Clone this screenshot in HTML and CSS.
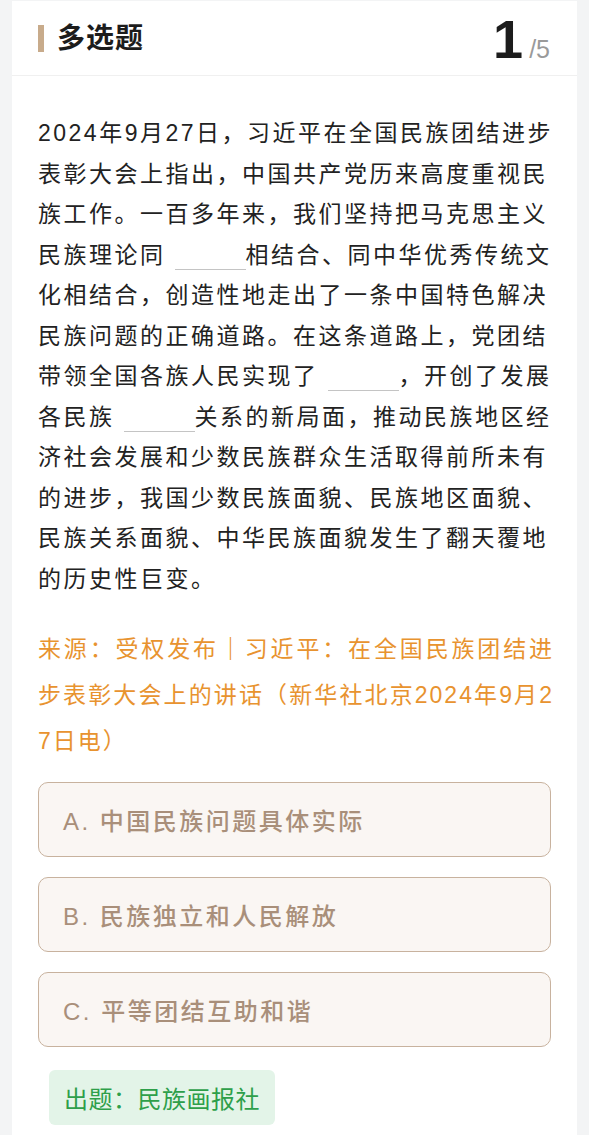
FILE: index.html
```html
<!DOCTYPE html>
<html lang="zh-CN">
<head>
    <meta charset="UTF-8">
    <meta name="viewport" content="width=device-width, initial-scale=1.0">
    <title>多选题</title>
    <link rel="stylesheet" href="styles.css">
</head>
<body>
    <div class="card">
        <div class="card-head">
            <div class="title">多选题</div>
            <div class="count"><span class="current">1</span><span class="total">/5</span></div>
        </div>

        <div class="card-body">
            <p class="question">2024年9月27日，习近平在全国民族团结进步表彰大会上指出，中国共产党历来高度重视民族工作。一百多年来，我们坚持把马克思主义民族理论同<span class="blank"></span>相结合、同中华优秀传统文化相结合，创造性地走出了一条中国特色解决民族问题的正确道路。在这条道路上，党团结带领全国各族人民实现了<span class="blank"></span>，开创了发展各民族<span class="blank"></span>关系的新局面，推动民族地区经济社会发展和少数民族群众生活取得前所未有的进步，我国少数民族面貌、民族地区面貌、民族关系面貌、中华民族面貌发生了翻天覆地的历史性巨变。</p>

            <p class="source">来源：受权发布<span class="sep">｜</span>习近平：在全国民族团结进步表彰大会上的讲话（新华社北京2024年9月27日电）</p>

            <div class="options">
                <div class="option">A. 中国民族问题具体实际</div>
                <div class="option">B. 民族独立和人民解放</div>
                <div class="option">C. 平等团结互助和谐</div>
            </div>

            <div class="author">出题：民族画报社</div>
        </div>
    </div>
</body>
</html>
```

FILE: styles.css
```css
body {
    margin: 0;
    background-color: #f3f4f5;
    font-family: 'Liberation Sans', 'Noto Sans CJK SC', sans-serif;
    color: #222;
}

.card {
    margin: 1px 12px 0 12px;
    background: #fff;
    min-height: 1134px;
}

.card-head {
    height: 74px;
    display: flex;
    justify-content: space-between;
    align-items: center;
    padding: 0 27px 0 26px;
    border-bottom: 1px solid #f0f0f0;
}

.title {
    border-left: 6px solid #c8ab8b;
    padding-left: 13px;
    font-size: 28px;
    font-weight: bold;
    line-height: 27px;
    color: #1c1c1c;
    letter-spacing: 1px;
}

.count {
    display: flex;
    align-items: baseline;
    gap: 6px;
    margin-top: 2px;
}

.count .current {
    font-size: 54px;
    font-weight: bold;
    line-height: 52px;
    color: #1c1c1c;
}

.count .total {
    font-size: 25px;
    color: #9a9a9a;
}

.card-body {
    padding: 37px 26px 0 26px;
}

.question {
    margin: 0;
    width: 518px;
    font-size: 23px;
    letter-spacing: 2.5px;
    line-height: 40.5px;
    color: #222;
}

.blank {
    display: inline-block;
    width: 71px;
    height: 0;
    margin-left: 9px;
    border-bottom: 1px solid #c4c4c4;
    vertical-align: -7px;
}

.source {
    margin: 27px 0 0 0;
    width: 516px;
    font-size: 23px;
    letter-spacing: 2px;
    line-height: 46px;
    color: #e8932f;
    word-break: break-all;
    text-align: justify;
}

.source .sep {
    font-weight: bold;
}

.options {
    display: flex;
    flex-direction: column;
    gap: 20px;
    margin-top: 18px;
}

.option {
    box-sizing: border-box;
    height: 75px;
    display: flex;
    align-items: center;
    padding: 0 24px;
    background: #faf6f3;
    border: 1px solid #c8b29e;
    border-radius: 10px;
    font-size: 24px;
    font-weight: 500;
    letter-spacing: 2.5px;
    color: #a98f7a;
}

.author {
    display: inline-block;
    margin: 23px 0 0 11px;
    padding: 10px 15px;
    background: #e3f4e8;
    color: #2e9f4a;
    font-size: 24px;
    letter-spacing: 0.5px;
    border-radius: 6px;
}
```
